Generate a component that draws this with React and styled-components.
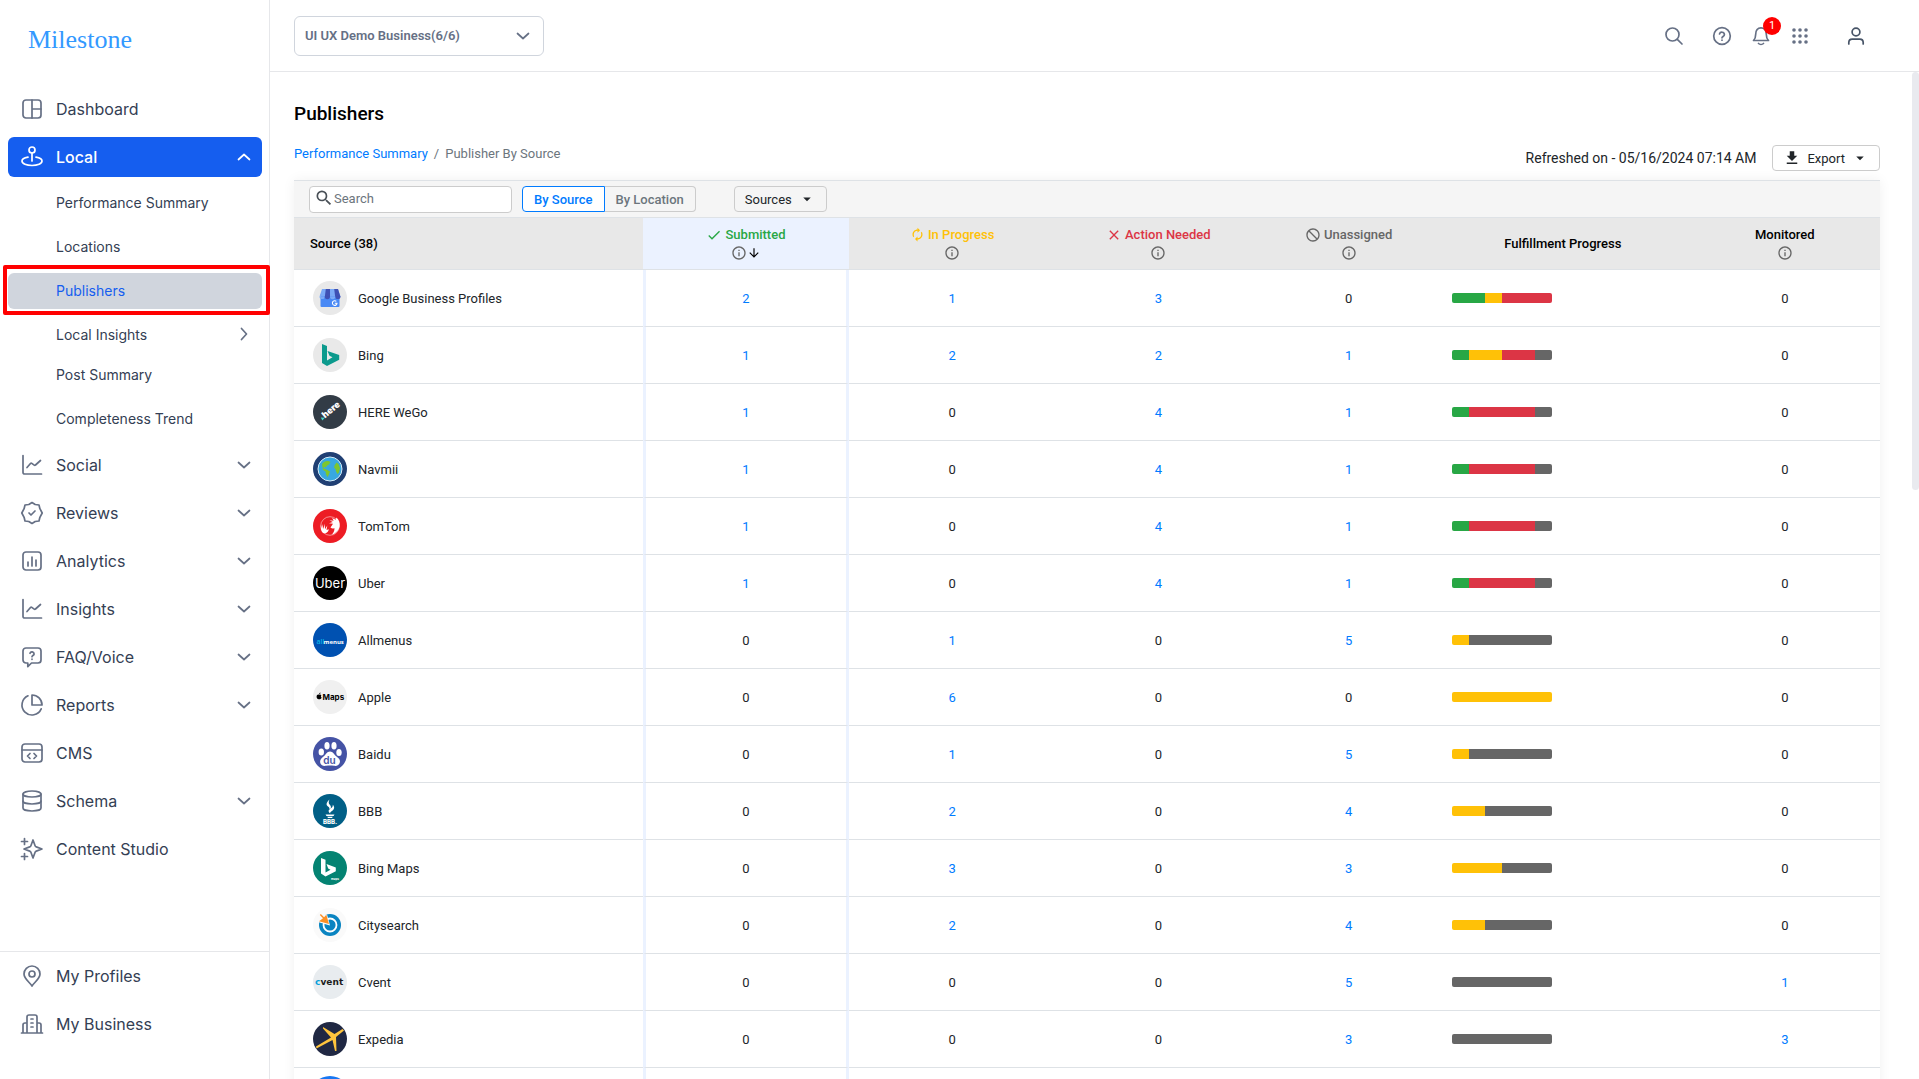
import React, { useState } from 'react';
import styled, { createGlobalStyle, css } from 'styled-components';
import {
  MdArrowDownward,
  MdArrowDropDown,
  MdAutorenew,
  MdBlock,
  MdCheck,
  MdClose,
  MdFileDownload,
  MdInfoOutline,
  MdSearch,
} from 'react-icons/md';

const icons = {
  dashboard: (
    <>
      <rect x="3" y="3" width="18" height="18" rx="3" />
      <path d="M12 3v18M12 12h9" />
    </>
  ),
  local: (
    <>
      <circle cx="12" cy="5" r="3" />
      <path d="M12 8v8" />
      <path d="M8 12.2c-3.5.6-6 2-6 3.9C2 18.700 6.500 20.500 12 20.500s10-1.800 10-4.400c0-1.900-2.500-3.300-6-3.900" />
    </>
  ),
  chart: (
    <>
      <path d="M21.500 21H4.600c-.9 0-1.600-.7-1.600-1.600V2.500" />
      <path d="M7 14.500l3.500-4a1 1 0 0 1 1.300-.1l2.400 1.700a1 1 0 0 0 1.300-.1L20.500 7.500" />
    </>
  ),
  reviews: (
    <>
      <path d="M9 12l2 2 4-4" />
      <path d="M12 1.500l3.200 2 3.800.5.9 3.700L22.200 12l-2.300 4.300L19 20l-3.800.5-3.200 2-3.200-2L5 20l-.9-3.700L1.800 12l2.300-4.300L5 4l3.800-.5z" />
    </>
  ),
  analytics: (
    <>
      <rect x="3" y="3" width="18" height="18" rx="3" />
      <path d="M8 13v4M12 8v9M16 11v6" />
    </>
  ),
  faq: (
    <>
      <path d="M6 3h12a3 3 0 0 1 3 3v9a3 3 0 0 1-3 3h-6.500L7.800 21.700V18H6a3 3 0 0 1-3-3V6a3 3 0 0 1 3-3z" />
      <path d="M10 8.300a2.100 2.100 0 0 1 4.100.6c0 1.400-2.100 1.700-2.100 2.800M12 14.200v.1" />
    </>
  ),
  reports: (
    <>
      <path d="M21.200 15.900A10 10 0 1 1 8 2.800" />
      <path d="M12 2a10 10 0 0 1 10 10H12z" />
    </>
  ),
  cms: (
    <>
      <rect x="2" y="3" width="20" height="18" rx="3" />
      <path d="M2 9h20M10 12.500L7.500 15l2.500 2.500M14 12.500l2.500 2.500-2.500 2.500" />
    </>
  ),
  schema: (
    <>
      <ellipse cx="12" cy="5" rx="9" ry="3" />
      <path d="M3 5v14c0 1.700 4 3 9 3s9-1.300 9-3V5" />
      <path d="M3 12c0 1.700 4 3 9 3s9-1.300 9-3" />
    </>
  ),
  studio: (
    <>
      <path d="M13 3l2.100 5.700a2 2 0 0 0 1.200 1.200L22 12l-5.700 2.100a2 2 0 0 0-1.200 1.200L13 21l-2.100-5.700a2 2 0 0 0-1.200-1.200L4 12l5.700-2.100a2 2 0 0 0 1.200-1.200z" />
      <path d="M4.500 1.500v6M1.500 4.500h6M4.500 16.500v6M1.500 19.500h6" />
    </>
  ),
  pin: (
    <>
      <circle cx="12" cy="10" r="3" />
      <path d="M12 22c2-3.500 8-7 8-12a8 8 0 1 0-16 0c0 5 6 8.500 8 12z" />
    </>
  ),
  business: (
    <>
      <path d="M7 21V5a2 2 0 0 1 2-2h6a2 2 0 0 1 2 2v16M7 11H5a2 2 0 0 0-2 2v8M17 11h2a2 2 0 0 1 2 2v8M1.500 21h21" />
      <path d="M11 7h2M11 11h2M11 15h2" />
    </>
  ),
  down: <path d="M6.500 9.500l5.500 5 5.500-5" />,
  up: <path d="M6.500 14.500l5.500-5 5.500 5" />,
  right: <path d="M9.500 6.500l5 5.500-5 5.500" />,
  search: (
    <>
      <circle cx="10.500" cy="10.500" r="6.500" />
      <path d="M15.300 15.300l4.700 4.700" />
    </>
  ),
  help: (
    <>
      <circle cx="12" cy="12" r="8.300" />
      <path d="M9.500 10a2.500 2.500 0 0 1 4.900.7c0 1.600-2.400 2-2.400 3.100M12 16.100v.1" />
    </>
  ),
  bell: (
    <>
      <path d="M4.500 16.500h15c-1.600-1.500-2.200-3.200-2.200-6.300 0-3.900-2-6.400-5.300-6.400s-5.300 2.500-5.300 6.400c0 3.100-.6 4.800-2.200 6.300z" />
      <path d="M9.500 19.500c1.300 1.200 3.700 1.200 5 0" />
    </>
  ),
  user: (
    <>
      <circle cx="12" cy="8" r="3.900" />
      <path d="M4.800 20v-1.400c0-2 1.400-3.400 3.400-3.400h7.600c2 0 3.400 1.400 3.400 3.400V20" />
    </>
  ),
};

const Icon = ({ name }) => (
  <StrokeIcon viewBox="0 0 24 24" aria-hidden="true">
    {icons[name]}
  </StrokeIcon>
);

const GridIcon = () => (
  <svg width="24" height="24" viewBox="0 0 24 24" fill="currentColor" aria-hidden="true">
    {[6, 12, 18].map((y) => [6, 12, 18].map((x) => <circle key={`${x}-${y}`} cx={x} cy={y} r="1.800" />))}
  </svg>
);

const logos = {
  google: (
    <>
      <circle cx="17" cy="17" r="17" fill="#e9e9e9" />
      <rect x="7.500" y="13" width="19" height="13" rx="1" fill="#4989f5" />
      <path d="M9 8h16l2.500 7.500h-21z" fill="#7baaf7" />
      <path d="M12.800 8H17v8h-5.200zM21.200 8H25l2.500 8h-5.300z" fill="#3f51b5" />
      <path d="M6.500 15.500h5.200a2.600 2.600 0 0 1-5.200 0z" fill="#7baaf7" />
      <path d="M11.700 15.500H17a2.600 2.600 0 0 1-5.300 0zM22.300 15.500h5.200a2.600 2.600 0 0 1-5.200 0z" fill="#3f51b5" />
      <path d="M17 15.500h5.300a2.600 2.600 0 0 1-5.300 0z" fill="#7baaf7" />
      <path d="M23.300 20.400a2.300 2.300 0 1 0 .7 1.800h-2.200" fill="none" stroke="#fff" strokeWidth="1.100" />
    </>
  ),
  bing: (
    <>
      <circle cx="17" cy="17" r="17" fill="#e9e9e9" />
      <path d="M9 6l5 2v14.500l5.500-3.200-3-1.500-2-4.800 11.700 4v4.800L14 28l-5-3z" fill="#0c9a8d" />
    </>
  ),
  here: (
    <>
      <circle cx="17" cy="17" r="17" fill="#323c46" />
      <path d="M7.800 22.500l4 .3-2.500 2.700z" fill="#48dad0" />
      <text x="12" y="23.500" transform="rotate(-40 12 23.500)" fill="#fff" fontFamily="Inter, sans-serif" fontWeight="900" fontSize="9">here</text>
    </>
  ),
  navmii: (
    <>
      <circle cx="17" cy="17" r="17" fill="#203f73" />
      <circle cx="17" cy="17" r="12" fill="#39a8e0" stroke="#d7ecf8" strokeWidth="1" />
      <path d="M9 12.500c1-2.500 3.500-4 6.500-3.500l2 1-1.500 2.500-2.500 1.500-.5 1.500-2-.5-.5 1.500 2.500.8 4 2.200-1 3-1.500 2.500-1.500-2.500-.5-3-2.500-1.500zM23.500 10.500l2 1.500 1.500 4-1 4.500-1.500 1.500-1.500-2.500-.5-2.500-1.500-1.500.8-2.500z" fill="#7dc62f" />
    </>
  ),
  tomtom: (
    <>
      <circle cx="17" cy="17" r="17" fill="#ed1c24" />
      <circle cx="17" cy="17" r="9.300" fill="none" stroke="#fff" strokeWidth=".5" />
      <path d="M10 24c-2-1.500-2.500-5-2-8.500l1 4.300.6-4.800.9 5 1.300-5.300.2 5.600 2.300-3.800-.8 4.500 2.300-.7c-.2 1.600-1.600 5-5.800 3.700z" fill="#fff" />
      <path d="M17.500 18.500l2.500-3.700-4-.5 3.800-1.400-3.300-1.600 4.200.4-1.600-2.600 3.700 1.700.6-2.200c2.500 2 3.800 5.300 3.200 8.800-.9 4.200-4.300 7.300-8 8.300 2.200-1.800 3-4 2.800-6.600-1.300.8-2.600.7-3.900-.6z" fill="#fff" />
    </>
  ),
  uber: (
    <>
      <circle cx="17" cy="17" r="17" fill="#000" />
      <text x="17" y="21.500" textAnchor="middle" fill="#fff" fontFamily="Inter, sans-serif" fontSize="13">Uber</text>
    </>
  ),
  allmenus: (
    <>
      <circle cx="17" cy="17" r="17" fill="#0051b1" />
      <text x="3.500" y="20.500" fill="#08b3e8" fontFamily="Open Sans, sans-serif" fontWeight="600" fontSize="7">all</text>
      <text x="10.500" y="20.500" fill="#fff" fontFamily="Open Sans, sans-serif" fontWeight="700" fontSize="6">menus</text>
    </>
  ),
  apple: (
    <>
      <circle cx="17" cy="17" r="17" fill="#f0f0f0" />
      <path d="M6.200 14.800c.8-.6 1.700-.3 2.200.5-.7.7-.6 1.800.2 2.300-.4 1.200-1.100 2-2.400 1.600-1.500.4-2.600-1-2.600-2.500 0-1.600 1.200-2.500 2.600-1.900zM6.200 14.300c0-.9.5-1.500 1.300-1.700 0 .9-.5 1.600-1.300 1.700z" fill="#000" />
      <text x="9.500" y="20" fill="#000" fontFamily="Inter, sans-serif" fontWeight="700" fontSize="8">Maps</text>
    </>
  ),
  baidu: (
    <>
      <circle cx="17" cy="17" r="17" fill="#4553a5" />
      <g fill="#fff">
        <ellipse cx="8.300" cy="15" rx="2.700" ry="3.500" />
        <ellipse cx="14" cy="8.800" rx="2.600" ry="3.800" />
        <ellipse cx="21" cy="8.800" rx="2.600" ry="3.800" />
        <ellipse cx="26" cy="15.500" rx="2.700" ry="3.500" />
        <path d="M17 14.500c3 0 4 3 6.500 5s4 3.500 3.300 6-2.800 3.800-5.800 3.300-5-.5-8 0-5.400-.8-5.800-3.300.800-4 3.300-6 3.500-5 6.500-5z" />
      </g>
      <text x="16.500" y="27" textAnchor="middle" fill="#4553a5" fontFamily="Inter, sans-serif" fontWeight="600" fontSize="10">du</text>
    </>
  ),
  bbb: (
    <>
      <circle cx="17" cy="17" r="17" fill="#015f86" />
      <path d="M16.500 5.500c-3 3-4 5-1.500 7 1.500 1.200 2 2 1 3.500 2.500-1.500 2.500-3.500.8-5.200-1.400-1.400-1.300-3-.3-5.300zM19.800 10.800c2 2.200 2 4.500-1.200 6.400-1 .6-1.600 1.200-1.400 2.200-2.500-1.700-1.700-3.600.2-4.800s2.500-2 2.400-3.800z" fill="#fff" />
      <path d="M12.500 20.500h9l-1 1.400h-7zM14.200 22.800h5.600l-.8 1.200h-4z" fill="#fff" />
      <text x="17" y="29.500" textAnchor="middle" fill="#fff" fontFamily="Inter, sans-serif" fontWeight="800" fontSize="6">BBB.</text>
    </>
  ),
  bingmaps: (
    <>
      <circle cx="17" cy="17" r="17" fill="#048372" />
      <path d="M8 7l4.500 1.700v12.800l5-2.800-2.300-1.300-1.700-4.400 9.300 3.500v3.700L12.500 25.500 8 22.500z" fill="#fff" />
      <text x="18" y="28.500" fill="#fff" fontFamily="Inter, sans-serif" fontWeight="700" fontSize="3">maps</text>
    </>
  ),
  citysearch: (
    <>
      <circle cx="17" cy="17" r="17" fill="#fafafa" />
      <circle cx="17" cy="17" r="11" fill="#0a84c1" />
      <circle cx="17" cy="17" r="6.500" fill="none" stroke="#fff" strokeWidth="1.800" />
      <path d="M17 17.500L6.500 14.500 5 10l2-4.500 7 1z" fill="#fafafa" />
      <path d="M16 16L13.300 6.800l-2.200 2.500-3.300-3.300-1 1L10 10.200l-4 3z" fill="#fb8f24" />
    </>
  ),
  cvent: (
    <>
      <circle cx="17" cy="17" r="17" fill="#e8ecef" />
      <text x="2" y="20" fill="#079fda" fontFamily="DejaVu Sans, sans-serif" fontWeight="700" fontSize="9">c</text>
      <text x="7.500" y="20" fill="#1c1c1c" fontFamily="DejaVu Sans, sans-serif" fontWeight="700" fontSize="9">vent</text>
    </>
  ),
  expedia: (
    <>
      <circle cx="17" cy="17" r="17" fill="#202843" />
      <path d="M3 24.500l15-9L10 6.500v-1.500l11.500 7 8-5 1.500 1.500-8 6.500L23.500 29h-1.500l-2.500-11L3.500 26.500z" fill="#fec43d" />
    </>
  ),
  facebook: <circle cx="17" cy="17" r="20" fill="#1877f2" />,
};

const subItems = [
  { label: 'Performance Summary' },
  { label: 'Locations' },
  { label: 'Publishers', active: true },
  { label: 'Local Insights', arrow: true },
  { label: 'Post Summary' },
  { label: 'Completeness Trend' },
];

const navItems = [
  { label: 'Social', icon: 'chart', arrow: true },
  { label: 'Reviews', icon: 'reviews', arrow: true },
  { label: 'Analytics', icon: 'analytics', arrow: true },
  { label: 'Insights', icon: 'chart', arrow: true },
  { label: 'FAQ/Voice', icon: 'faq', arrow: true },
  { label: 'Reports', icon: 'reports', arrow: true },
  { label: 'CMS', icon: 'cms' },
  { label: 'Schema', icon: 'schema', arrow: true },
  { label: 'Content Studio', icon: 'studio' },
];

const sources = [
  { name: 'Google Business Profiles', logo: 'google', counts: [2, 1, 3, 0], monitored: 0 },
  { name: 'Bing', logo: 'bing', counts: [1, 2, 2, 1], monitored: 0 },
  { name: 'HERE WeGo', logo: 'here', counts: [1, 0, 4, 1], monitored: 0 },
  { name: 'Navmii', logo: 'navmii', counts: [1, 0, 4, 1], monitored: 0 },
  { name: 'TomTom', logo: 'tomtom', counts: [1, 0, 4, 1], monitored: 0 },
  { name: 'Uber', logo: 'uber', counts: [1, 0, 4, 1], monitored: 0 },
  { name: 'Allmenus', logo: 'allmenus', counts: [0, 1, 0, 5], monitored: 0 },
  { name: 'Apple', logo: 'apple', counts: [0, 6, 0, 0], monitored: 0 },
  { name: 'Baidu', logo: 'baidu', counts: [0, 1, 0, 5], monitored: 0 },
  { name: 'BBB', logo: 'bbb', counts: [0, 2, 0, 4], monitored: 0 },
  { name: 'Bing Maps', logo: 'bingmaps', counts: [0, 3, 0, 3], monitored: 0 },
  { name: 'Citysearch', logo: 'citysearch', counts: [0, 2, 0, 4], monitored: 0 },
  { name: 'Cvent', logo: 'cvent', counts: [0, 0, 0, 5], monitored: 1 },
  { name: 'Expedia', logo: 'expedia', counts: [0, 0, 0, 3], monitored: 3 },
];

const barColors = ['#28a745', '#ffc107', '#dc3545', '#666666'];

const Count = ({ value }) => (value > 0 ? <CountLink href="#">{value}</CountLink> : value);

const Progress = ({ counts }) => {
  const total = counts.reduce((sum, n) => sum + n, 0);

  return (
    <Bar>
      {counts.map((n, index) => (
        <BarPart key={index} $color={barColors[index]} style={{ width: `${(n / total) * 100}%` }} />
      ))}
    </Bar>
  );
};

const Logo = ({ name }) => (
  <LogoImage viewBox="0 0 34 34" aria-hidden="true">
    {logos[name]}
  </LogoImage>
);

const Sidebar = () => (
  <SideNav>
    <Brand href="#">Milestone</Brand>
    <NavList>
      <NavItem href="#">
        <Icon name="dashboard" />
        <NavLabel>Dashboard</NavLabel>
      </NavItem>
      <NavItem href="#" $active>
        <Icon name="local" />
        <NavLabel>Local</NavLabel>
        <Icon name="up" />
      </NavItem>
      <SubList>
        {subItems.map(({ label, active, arrow }) => (
          <SubItem key={label} href="#" $active={active} $expandable={arrow}>
            <NavLabel>{label}</NavLabel>
            {arrow && <Icon name="right" />}
          </SubItem>
        ))}
      </SubList>
      {navItems.map(({ label, icon, arrow }) => (
        <NavItem key={label} href="#">
          <Icon name={icon} />
          <NavLabel>{label}</NavLabel>
          {arrow && <Icon name="down" />}
        </NavItem>
      ))}
    </NavList>
    <NavFooter>
      <NavItem href="#">
        <Icon name="pin" />
        <NavLabel>My Profiles</NavLabel>
      </NavItem>
      <NavItem href="#">
        <Icon name="business" />
        <NavLabel>My Business</NavLabel>
      </NavItem>
    </NavFooter>
  </SideNav>
);

const TopBar = () => (
  <Header>
    <BusinessPicker>
      <select aria-label="Business" defaultValue="demo">
        <option value="demo">UI UX Demo Business(6/6)</option>
      </select>
      <Icon name="down" />
    </BusinessPicker>
    <HeaderTools>
      <SearchTool aria-label="Search">
        <Icon name="search" />
      </SearchTool>
      <HeaderButton aria-label="Help">
        <Icon name="help" />
      </HeaderButton>
      <HeaderButton aria-label="Notifications">
        <Icon name="bell" />
        <Badge>1</Badge>
      </HeaderButton>
      <HeaderButton aria-label="Apps">
        <GridIcon />
      </HeaderButton>
      <UserTool aria-label="Account">
        <Icon name="user" />
      </UserTool>
    </HeaderTools>
  </Header>
);

const SourceTable = () => (
  <Table>
    <colgroup>
      <Col $width={22} />
      <Col $width={13} />
      <Col $width={13} />
      <Col $width={13} />
      <Col $width={11} />
      <Col $width={16} />
      <Col $width={12} />
    </colgroup>
    <thead>
      <tr>
        <HeadCell $left>Source (38)</HeadCell>
        <HeadCell $sorted $color="#28a745">
          <HeadLine><MdCheck size={16} />Submitted</HeadLine>
          <InfoLine><MdInfoOutline size={16} /><SortArrow size={14} /></InfoLine>
        </HeadCell>
        <HeadCell $color="#ffc107">
          <HeadLine><MdAutorenew size={15} />In Progress</HeadLine>
          <InfoLine><MdInfoOutline size={16} /></InfoLine>
        </HeadCell>
        <HeadCell $color="#dc3545">
          <HeadLine><MdClose size={16} />Action Needed</HeadLine>
          <InfoLine><MdInfoOutline size={16} /></InfoLine>
        </HeadCell>
        <HeadCell $color="#666">
          <HeadLine><BlockIcon size={16} />Unassigned</HeadLine>
          <InfoLine><MdInfoOutline size={16} /></InfoLine>
        </HeadCell>
        <HeadCell>Fulfillment Progress</HeadCell>
        <HeadCell>
          <HeadLine>Monitored</HeadLine>
          <InfoLine><MdInfoOutline size={16} /></InfoLine>
        </HeadCell>
      </tr>
    </thead>
    <tbody>
      {sources.map(({ name, logo, counts, monitored }) => (
        <tr key={name}>
          <SourceCell>
            <SourceName>
              <Logo name={logo} />
              {name}
            </SourceName>
          </SourceCell>
          <Cell $sorted><Count value={counts[0]} /></Cell>
          <Cell><Count value={counts[1]} /></Cell>
          <Cell><Count value={counts[2]} /></Cell>
          <Cell><Count value={counts[3]} /></Cell>
          <Cell><Progress counts={counts} /></Cell>
          <Cell><Count value={monitored} /></Cell>
        </tr>
      ))}
      <tr>
        <SourceCell>
          <SourceName>
            <Logo name="facebook" />
          </SourceName>
        </SourceCell>
        <Cell $sorted />
        <Cell colSpan={5} />
      </tr>
    </tbody>
  </Table>
);

const App = () => {
  const [view, setView] = useState('source');
  const [query, setQuery] = useState('');

  return (
    <>
      <GlobalStyle />
      <Shell>
        <Sidebar />
        <Main>
          <TopBar />
          <Content>
            <Page>
              <PageTitle>Publishers</PageTitle>
              <PageBar>
                <Breadcrumb>
                  <a href="#">Performance Summary</a>
                  <span>/</span>
                  <span>Publisher By Source</span>
                </Breadcrumb>
                <PageActions>
                  <Refreshed>Refreshed on - 05/16/2024 07:14 AM</Refreshed>
                  <BoxButton>
                    <MdFileDownload size={18} />
                    Export
                    <MdArrowDropDown size={18} />
                  </BoxButton>
                </PageActions>
              </PageBar>
              <Card>
                <Toolbar>
                  <SearchBox>
                    <MdSearch size={20} />
                    <input
                      type="text"
                      aria-label="Search"
                      placeholder="Search"
                      value={query}
                      onChange={(e) => setQuery(e.target.value)}
                    />
                  </SearchBox>
                  <ToggleGroup>
                    <Toggle $active={view === 'source'} onClick={() => setView('source')}>By Source</Toggle>
                    <Toggle $active={view === 'location'} onClick={() => setView('location')}>By Location</Toggle>
                  </ToggleGroup>
                  <SourcesButton>
                    Sources
                    <MdArrowDropDown size={18} />
                  </SourcesButton>
                </Toolbar>
                <SourceTable />
              </Card>
            </Page>
            <ScrollTrack>
              <ScrollThumb />
            </ScrollTrack>
          </Content>
        </Main>
      </Shell>
    </>
  );
};

export default App;

const GlobalStyle = createGlobalStyle`
  * {
    box-sizing: border-box;
  }

  body {
    margin: 0;
    overflow: hidden;
    background: #fff;
    color: #212529;
    font-family: Roboto, sans-serif;
    font-size: 13px;
  }

  a {
    text-decoration: none;
  }

  button, input, select {
    font-family: inherit;
  }

  svg {
    flex: none;
  }
`;

const StrokeIcon = styled.svg`
  width: 24px;
  height: 24px;
  fill: none;
  stroke: currentColor;
  stroke-width: 1.7;
  stroke-linecap: round;
  stroke-linejoin: round;
`;

const LogoImage = styled.svg`
  width: 34px;
  height: 34px;
  overflow: visible;
`;

const Shell = styled.div`
  display: flex;
  height: 100vh;
`;

const SideNav = styled.nav`
  display: flex;
  flex-direction: column;
  flex: none;
  width: 270px;
  border-right: 1px solid #e6e7ea;
  font-family: Inter, sans-serif;
`;

const Brand = styled.a`
  padding: 24px 28px 0;
  height: 89px;
  color: #3399ff;
  font-family: "Liberation Serif", serif;
  font-size: 26px;
  line-height: 32px;
`;

const NavList = styled.div`
  display: flex;
  flex-direction: column;
  flex: 1;
  gap: 8px;
  padding: 0 7px 0 8px;
`;

const NavItem = styled.a`
  display: flex;
  align-items: center;
  gap: 12px;
  height: 40px;
  padding: 0 6px 0 12px;
  border-radius: 6px;
  color: #667085;
  font-size: 16px;

  span {
    color: #344054;
  }

  ${({ $active }) => $active && css`
    background: #155eef;
    color: #fff;

    span {
      color: #fff;
      font-weight: 500;
    }
  `}
`;

const NavLabel = styled.span`
  flex: 1;
`;

const SubList = styled.div`
  display: flex;
  flex-direction: column;
  gap: 8px;
`;

const SubItem = styled.a`
  position: relative;
  display: flex;
  align-items: center;
  height: 36px;
  padding: 0 6px 2px 48px;
  margin-bottom: ${({ $expandable }) => ($expandable ? '-4px' : '0')};
  border-radius: 6px;
  color: #667085;
  font-size: 14px;

  span {
    color: ${({ $active }) => ($active ? '#155eef' : '#344054')};
  }

  ${({ $active }) => $active && css`
    background: #d0d5dd;

    &::after {
      content: '';
      position: absolute;
      inset: -8px -8px -6px -5px;
      border: 4px solid #ff0000;
      border-radius: 2px;
    }
  `}
`;

const NavFooter = styled.div`
  display: flex;
  flex-direction: column;
  gap: 8px;
  height: 128px;
  padding: 4px 7px 0 8px;
  border-top: 1px solid #e6e7ea;
`;

const Main = styled.div`
  display: flex;
  flex-direction: column;
  flex: 1;
  min-width: 0;
`;

const Header = styled.header`
  display: flex;
  align-items: center;
  justify-content: space-between;
  flex: none;
  height: 72px;
  padding: 0 51px 0 24px;
  border-bottom: 1px solid #e6e7ea;
`;

const BusinessPicker = styled.div`
  display: grid;
  align-items: center;
  width: 250px;
  color: #667085;

  select, svg {
    grid-area: 1 / 1;
  }

  select {
    appearance: none;
    width: 100%;
    height: 40px;
    padding: 0 36px 0 10px;
    border: 1px solid #d0d5dd;
    border-radius: 6px;
    background: #fff;
    color: #667085;
    font-size: 13px;
    font-weight: 600;
  }

  svg {
    justify-self: end;
    margin-right: 9px;
    pointer-events: none;
  }
`;

const HeaderTools = styled.div`
  display: flex;
  gap: 15px;
`;

const HeaderButton = styled.button`
  position: relative;
  display: flex;
  padding: 0;
  border: 0;
  background: none;
  color: #667085;
  cursor: pointer;
`;

const SearchTool = styled(HeaderButton)`
  margin-right: 9px;
`;

const UserTool = styled(HeaderButton)`
  margin-left: 17px;
  color: #475467;
`;

const Badge = styled.span`
  position: absolute;
  top: -7px;
  right: -8px;
  width: 18px;
  height: 18px;
  border-radius: 50%;
  background: #ff0000;
  color: #fff;
  font-size: 11px;
  line-height: 18px;
  text-align: center;
`;

const Content = styled.main`
  display: flex;
  flex: 1;
  min-height: 0;
`;

const Page = styled.div`
  flex: 1;
  min-width: 0;
  padding: 28px 32px 0 24px;
  overflow: hidden;
`;

const PageTitle = styled.h1`
  margin: 0;
  color: #000;
  font-size: 19px;
  font-weight: 500;
  line-height: 28px;
`;

const PageBar = styled.div`
  display: flex;
  justify-content: space-between;
  height: 52px;
  padding-top: 16px;
`;

const Breadcrumb = styled.nav`
  display: flex;
  gap: 6px;
  color: #6c757d;
  line-height: 20px;

  a {
    color: #007bff;
  }
`;

const PageActions = styled.div`
  display: flex;
  align-items: center;
  gap: 16px;
  height: 28px;
`;

const Refreshed = styled.span`
  font-size: 14px;
`;

const BoxButton = styled.button`
  display: flex;
  align-items: center;
  gap: 6px;
  height: 26px;
  padding: 0 10px;
  border: 1px solid #ccc;
  border-radius: 4px;
  background: transparent;
  color: #212529;
  font-size: 13px;
  cursor: pointer;
`;

const SourcesButton = styled(BoxButton)`
  margin-left: 28px;
`;

const Card = styled.section`
  border-top: 1px solid #dee2e6;
  background: #fff;
  box-shadow: 0 0 12px rgba(0, 0, 0, 0.06);
`;

const Toolbar = styled.div`
  display: flex;
  align-items: center;
  gap: 10px;
  height: 36px;
  padding: 0 15px;
  background: #f5f5f5;
`;

const SearchBox = styled.label`
  display: flex;
  align-items: center;
  width: 203px;
  height: 27px;
  padding: 0 4px 2px;
  border: 1px solid #ccc;
  border-radius: 4px;
  background: #fff;
  color: #495057;

  input {
    flex: 1;
    min-width: 0;
    padding: 0;
    border: 0;
    outline: 0;
    font-size: 13px;
  }

  input::placeholder {
    color: #6c757d;
  }
`;

const ToggleGroup = styled.div`
  display: flex;
`;

const Toggle = styled.button`
  height: 26px;
  padding: 0 11px;
  border: 1px solid ${({ $active }) => ($active ? '#007bff' : '#ccc')};
  background: ${({ $active }) => ($active ? '#fff' : 'transparent')};
  color: ${({ $active }) => ($active ? '#007bff' : '#6c757d')};
  font-size: 13px;
  font-weight: 500;
  cursor: pointer;

  &:first-child {
    border-radius: 4px 0 0 4px;
  }

  &:last-child {
    border-left: 0;
    border-radius: 0 4px 4px 0;
  }
`;

const Table = styled.table`
  width: 100%;
  table-layout: fixed;
  border-collapse: separate;
  border-spacing: 0;
  border-top: 1px solid #dee2e6;
`;

const Col = styled.col`
  width: ${({ $width }) => $width}%;
`;

const HeadCell = styled.th`
  height: 52px;
  padding: 0 16px;
  border-bottom: 1px solid #dee2e6;
  background: ${({ $sorted }) => ($sorted ? '#ebf2ff' : '#e8e8e8')};
  color: ${({ $color }) => $color || '#000'};
  font-weight: 500;
  text-align: ${({ $left }) => ($left ? 'left' : 'center')};
`;

const HeadLine = styled.div`
  display: flex;
  align-items: center;
  justify-content: center;
  gap: 3px;
  line-height: 18px;
`;

const InfoLine = styled(HeadLine)`
  gap: 0;
  height: 18px;
  color: #666;
`;

const SortArrow = styled(MdArrowDownward)`
  color: #000;
  stroke: currentColor;
`;

/* slash runs from the top left to the bottom right */
const BlockIcon = styled(MdBlock)`
  transform: scaleX(-1);
`;

const Cell = styled.td`
  height: 57px;
  padding: 0 16px;
  border-bottom: 1px solid #dee2e6;
  text-align: center;

  ${({ $sorted }) => $sorted && css`
    border-right: 3px solid #ebf2ff;
    border-left: 3px solid #ebf2ff;
  `}
`;

const SourceCell = styled(Cell)`
  padding-left: 19px;
`;

const SourceName = styled.div`
  display: flex;
  align-items: center;
  gap: 11px;
`;

const CountLink = styled.a`
  color: #007bff;
`;

const Bar = styled.div`
  display: flex;
  width: 100px;
  height: 10px;
  border-radius: 2px;
  overflow: hidden;
`;

const BarPart = styled.span`
  background: ${({ $color }) => $color};
`;

const ScrollTrack = styled.div`
  flex: none;
  width: 7px;
`;

const ScrollThumb = styled.div`
  height: 418px;
  border-radius: 4px;
  background: #e9eaef;
`;
